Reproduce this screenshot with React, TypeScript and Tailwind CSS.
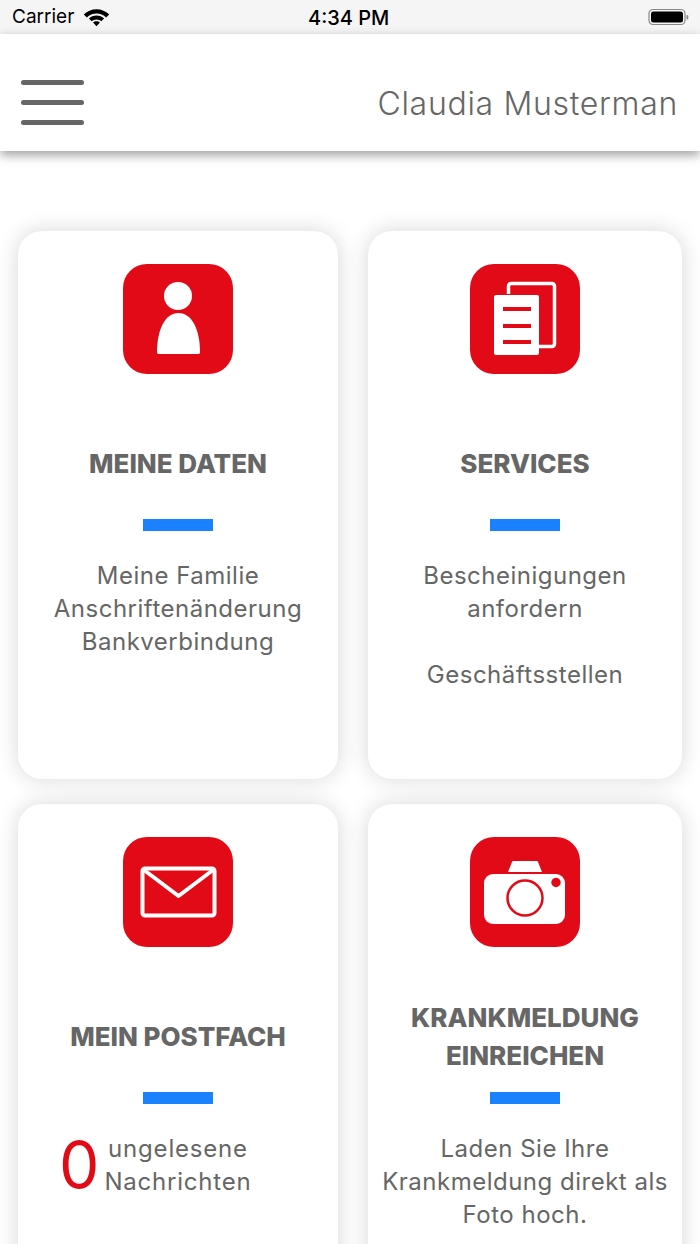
import React from 'react';

const PersonIcon = () => (
  <svg viewBox="0 0 110 110" className="w-[110px] h-[110px]">
    <rect width="110" height="110" rx="24" fill="#e30a17" />
    <circle cx="55" cy="32" r="14" fill="#fff" />
    <path d="M34 88c0-22 8-39 21.500-39S77 66 77 88c0 1.500-.7 2-2 2H36c-1.300 0-2-.5-2-2z" fill="#fff" />
  </svg>
);

const DocsIcon = () => (
  <svg viewBox="0 0 110 110" className="w-[110px] h-[110px]">
    <rect width="110" height="110" rx="24" fill="#e30a17" />
    <path d="M38.500 30v-8a2.500 2.500 0 0 1 2.500-2.500h41a2.500 2.500 0 0 1 2.500 2.500v58a2.500 2.500 0 0 1-2.500 2.500H69" fill="none" stroke="#fff" strokeWidth="3.500" />
    <rect x="24" y="31" width="45" height="60" rx="2" fill="#fff" />
    <rect x="33" y="43" width="28" height="4" fill="#e30a17" />
    <rect x="33" y="60" width="28" height="4" fill="#e30a17" />
    <rect x="33" y="76" width="28" height="4" fill="#e30a17" />
  </svg>
);

const MailIcon = () => (
  <svg viewBox="0 0 110 110" className="w-[110px] h-[110px]">
    <rect width="110" height="110" rx="24" fill="#e30a17" />
    <rect x="19.500" y="31.500" width="72" height="47" rx="2.500" fill="none" stroke="#fff" strokeWidth="4" />
    <path d="M21 33l34.500 26L90 33" fill="none" stroke="#fff" strokeWidth="4" strokeLinejoin="round" />
  </svg>
);

const CameraIcon = () => (
  <svg viewBox="0 0 110 110" className="w-[110px] h-[110px]">
    <rect width="110" height="110" rx="24" fill="#e30a17" />
    <path d="M38 35l4-10c.2-.6.7-1 1.300-1h23.400c.6 0 1.100.4 1.300 1l4 10z" fill="#fff" />
    <rect x="14" y="37" width="81" height="50" rx="9" fill="#fff" />
    <circle cx="55" cy="61" r="17.500" fill="none" stroke="#e30a17" strokeWidth="2.500" />
    <circle cx="86" cy="45.500" r="4.700" fill="#e30a17" />
  </svg>
);

function Card({
  icon,
  title,
  widthClass,
  children,
}: {
  icon: React.ReactNode;
  title: React.ReactNode;
  widthClass: string;
  children: React.ReactNode;
}) {
  return (
    <div className={`${widthClass} h-[548px] bg-white rounded-[24px] shadow-[0_0_22px_rgba(0,0,0,0.16)] pt-[33px] flex flex-col items-center`}>
      {icon}
      <div className="mt-[35px] h-[110px] flex items-center justify-center text-center text-[26px] leading-[38px] font-extrabold text-[#666]">
        {title}
      </div>
      <div className="w-[70px] h-[12px] bg-[#1a82ff]" />
      <div className="mt-[28px] w-full text-center text-[24px] leading-[33px] tracking-[0.5px] text-[#666]">{children}</div>
    </div>
  );
}

export default function App() {
  return (
    <div className="w-[700px] h-[1244px] overflow-hidden bg-white font-['Inter',sans-serif]">
      <div className="h-[34px] bg-[#f5f5f5] relative flex items-center justify-between pl-[12px] pr-[8px] text-black">
        <div className="flex items-center gap-[9px]">
          <span className="text-[19px] mt-[1px]">Carrier</span>
          <svg viewBox="0 0 26 20" className="w-[27px] h-[21px]">
            <path d="M13 2C8.200 2 4 3.900 .8 7l2.900 3C6.100 7.700 9.400 6.200 13 6.200s6.900 1.500 9.300 3.800l2.900-3C22 3.900 17.800 2 13 2z" fill="#000" />
            <path d="M13 8c-2.800 0-5.400 1.100-7.300 2.900l2.700 2.800c1.200-1.100 2.800-1.800 4.600-1.800s3.400.7 4.600 1.800l2.700-2.800C18.400 9.100 15.800 8 13 8z" fill="#000" />
            <path d="M13 13.600c-1.300 0-2.400.5-3.300 1.300L13 18.500l3.300-3.600c-.9-.8-2-1.300-3.300-1.300z" fill="#000" />
          </svg>
        </div>
        <span className="absolute left-[308px] text-[20px] font-medium mt-[1px]">4:34 PM</span>
        <svg viewBox="0 0 44 20" className="w-[44px] h-[20px]">
          <rect x="1" y="2.500" width="36" height="15" rx="4" fill="none" stroke="#888" strokeWidth="1.200" />
          <rect x="3" y="4.500" width="32" height="11" rx="2.500" fill="#000" />
          <rect x="38.500" y="8" width="1.800" height="4.500" rx="0.900" fill="#888" />
        </svg>
      </div>

      <header className="h-[117px] bg-white flex items-center justify-between pl-[21px] pr-[22px] shadow-[0_4px_10px_rgba(0,0,0,0.38)] relative">
        <div className="flex flex-col gap-[15px] w-[63px] mt-[19px]">
          <div className="h-[5px] rounded-full bg-[#666]" />
          <div className="h-[5px] rounded-full bg-[#666]" />
          <div className="h-[5px] rounded-full bg-[#666]" />
        </div>
        <span className="text-[32px] tracking-[0.7px] font-light text-[#666] mt-[22px]">Claudia Musterman</span>
      </header>

      <main className="pt-[80px] pl-[18px] flex flex-col gap-[24.6px]">
        <div className="flex gap-[30px]">
          <Card widthClass="w-[320px]" icon={<PersonIcon />} title="MEINE DATEN">
            <p>Meine Familie</p>
            <p>Anschriftenänderung</p>
            <p>Bankverbindung</p>
          </Card>
          <Card widthClass="w-[314px]" icon={<DocsIcon />} title="SERVICES">
            <p>Bescheinigungen</p>
            <p>anfordern</p>
            <p className="mt-[33px]">Geschäftsstellen</p>
          </Card>
        </div>
        <div className="flex gap-[30px]">
          <Card widthClass="w-[320px]" icon={<MailIcon />} title="MEIN POSTFACH">
            <div className="flex items-center pl-[41px]">
              <span className="text-[64px] leading-[66px] font-normal tracking-normal text-[#e30a17]">0</span>
              <div className="ml-[5px] text-center tracking-[0.8px]">
                <p>ungelesene</p>
                <p>Nachrichten</p>
              </div>
            </div>
          </Card>
          <Card
            widthClass="w-[314px]"
            icon={<CameraIcon />}
            title={
              <span>
                KRANKMELDUNG
                <br />
                EINREICHEN
              </span>
            }
          >
            <p>Laden Sie Ihre</p>
            <p>Krankmeldung direkt als</p>
            <p>Foto hoch.</p>
          </Card>
        </div>
      </main>
    </div>
  );
}
